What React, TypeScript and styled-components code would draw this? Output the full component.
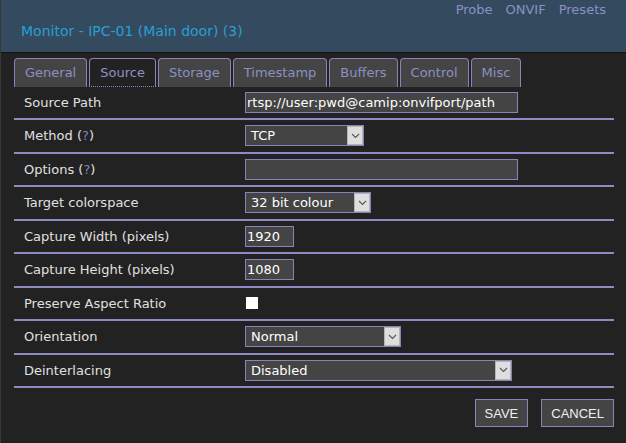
import styled, { createGlobalStyle } from "styled-components";

const GlobalStyle = createGlobalStyle`
  html, body {
    margin: 0;
    padding: 0;
    background: #222222;
  }
  body {
    font-family: "DejaVu Sans", Verdana, sans-serif;
    font-size: 13px;
    color: #e0e0e0;
  }
`;

const tabs = ["General", "Source", "Storage", "Timestamp", "Buffers", "Control", "Misc"];

const Chevron = () => (
  <svg width="9" height="6" viewBox="0 0 9 6">
    <path d="M1 1 L4.5 4.5 L8 1" fill="none" stroke="#555" strokeWidth="1.1" />
  </svg>
);

const Dropdown = ({ value, width }: { value: string; width: number }) => (
  <SelectBox $width={width}>
    <SelectValue>{value}</SelectValue>
    <SelectArrow>
      <Chevron />
    </SelectArrow>
  </SelectBox>
);

const Help = () => (
  <>
    {" "}(<HelpMark>?</HelpMark>)
  </>
);

const App = () => {
  return (
    <Page>
      <GlobalStyle />
      <Header>
        <NavLinks>
          <NavLink>Probe</NavLink>
          <NavLink>ONVIF</NavLink>
          <NavLink>Presets</NavLink>
        </NavLinks>
        <Title>Monitor - IPC-01 (Main door) (3)</Title>
      </Header>

      <TabBar>
        {tabs.map((t) => (
          <Tab key={t} $active={t === "Source"}>
            {t}
          </Tab>
        ))}
      </TabBar>

      <Table>
        <Row>
          <Label>Source Path</Label>
          <Field>
            <TextInput $width={273} defaultValue="rtsp://user:pwd@camip:onvifport/path" />
          </Field>
        </Row>
        <Row>
          <Label>
            Method<Help />
          </Label>
          <Field>
            <Dropdown value="TCP" width={119} />
          </Field>
        </Row>
        <Row>
          <Label>
            Options<Help />
          </Label>
          <Field>
            <TextInput $width={273} defaultValue="" />
          </Field>
        </Row>
        <Row>
          <Label>Target colorspace</Label>
          <Field>
            <Dropdown value="32 bit colour" width={126} />
          </Field>
        </Row>
        <Row>
          <Label>Capture Width (pixels)</Label>
          <Field>
            <TextInput $width={49} defaultValue="1920" />
          </Field>
        </Row>
        <Row>
          <Label>Capture Height (pixels)</Label>
          <Field>
            <TextInput $width={49} defaultValue="1080" />
          </Field>
        </Row>
        <Row>
          <Label>Preserve Aspect Ratio</Label>
          <Field>
            <Checkbox />
          </Field>
        </Row>
        <Row>
          <Label>Orientation</Label>
          <Field>
            <Dropdown value="Normal" width={156} />
          </Field>
        </Row>
        <Row>
          <Label>Deinterlacing</Label>
          <Field>
            <Dropdown value="Disabled" width={267} />
          </Field>
        </Row>
      </Table>

      <Actions>
        <Button>SAVE</Button>
        <Button>CANCEL</Button>
      </Actions>
    </Page>
  );
};

export default App;

const Page = styled.div`
  width: 626px;
  height: 443px;
  background: #222222;
  border-left: 1px solid #383838;
  box-sizing: border-box;
  overflow: hidden;
`;

const Header = styled.div`
  height: 52px;
  background: #344a5e;
  border-bottom: 1px solid #111;
  padding: 0 20px 0 20px;
  display: flex;
  flex-direction: column;
`;

const NavLinks = styled.div`
  display: flex;
  justify-content: flex-end;
  gap: 13px;
  line-height: 19px;
`;

const NavLink = styled.span`
  color: #8c90c6;
  font-size: 13px;
`;

const Title = styled.div`
  margin-top: 2px;
  color: #2a9fd6;
  font-size: 14px;
  line-height: 20px;
`;

const TabBar = styled.div`
  display: flex;
  gap: 2px;
  margin-top: 5px;
  padding-left: 13px;
`;

const Tab = styled.div<{ $active?: boolean }>`
  line-height: 27px;
  padding: 0 10px;
  border: 1px solid #8884bb;
  border-bottom: ${(p) => (p.$active ? "1px dotted #8884bb" : "none")};
  border-radius: 4px 4px 0 0;
  background: ${(p) => (p.$active ? "#222222" : "#444444")};
  color: #8c90c6;
  font-size: 13px;
  box-sizing: content-box;
  height: ${(p) => (p.$active ? "27px" : "28px")};
`;

const Table = styled.div`
  margin: 0 12px 0 13px;
`;

const Row = styled.div`
  display: grid;
  grid-template-columns: 231px 1fr;
  align-items: center;
  height: 33.5px;
  box-sizing: border-box;
  border-bottom: 2px solid #8d8bc4;

  &:first-child {
    height: 33px;
  }
`;

const Label = styled.div`
  padding-left: 10px;
  color: #e0e0e0;
  font-size: 13px;
`;

const HelpMark = styled.span`
  color: #6f8cbc;
`;

const Field = styled.div`
  display: flex;
  align-items: center;
`;

const TextInput = styled.input<{ $width: number }>`
  width: ${(p) => p.$width}px;
  height: 21px;
  box-sizing: border-box;
  padding: 0 1px;
  background: #444444;
  border: 1px solid #8884bb;
  color: #ffffff;
  font-family: "DejaVu Sans", Verdana, sans-serif;
  font-size: 13px;
  outline: none;
`;

const SelectBox = styled.div<{ $width: number }>`
  width: ${(p) => p.$width}px;
  height: 21px;
  box-sizing: border-box;
  display: flex;
  background: #444444;
  border: 1px solid #8884bb;
`;

const SelectValue = styled.div`
  flex: 1;
  padding-left: 5px;
  line-height: 19px;
  color: #ffffff;
  font-size: 13px;
  white-space: nowrap;
`;

const SelectArrow = styled.div`
  width: 16px;
  display: flex;
  align-items: center;
  justify-content: center;
  background: #dedede;
  border: 1px solid #b4b4b4;
  box-sizing: border-box;
`;

const Checkbox = styled.div`
  width: 12px;
  height: 12px;
  margin-left: 1px;
  background: #ffffff;
`;

const Actions = styled.div`
  display: flex;
  justify-content: flex-end;
  gap: 13px;
  margin: 11px 12px 0 0;
`;

const Button = styled.button`
  height: 28px;
  padding: 0 9px;
  background: #444444;
  border: 1px solid #8884bb;
  color: #f0f0f0;
  font-family: "Liberation Sans", Arial, sans-serif;
  font-size: 13px;
  cursor: pointer;
`;
